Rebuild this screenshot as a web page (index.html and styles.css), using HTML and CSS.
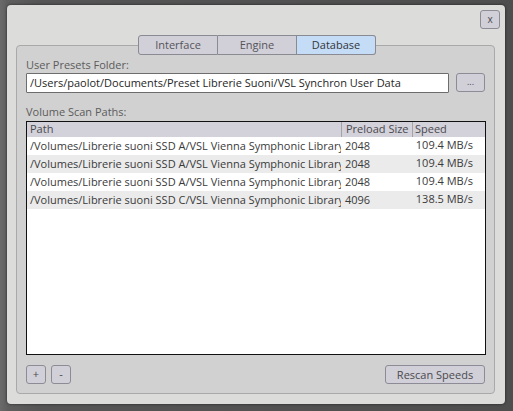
FILE: index.html
```html
<!DOCTYPE html>
<html>
<head>
<meta charset="utf-8">
<link rel="stylesheet" href="styles.css">
</head>
<body>
<div class="dialog">
  <div class="topbar"><button class="btn close">x</button></div>
  <div class="panel">
    <div class="tabs">
      <div class="tab">Interface</div>
      <div class="tab">Engine</div>
      <div class="tab active">Database</div>
    </div>
    <div class="label first">User Presets Folder:</div>
    <div class="folder-row">
      <div class="input">/Users/paolot/Documents/Preset Librerie Suoni/VSL Synchron User Data</div>
      <button class="btn browse">...</button>
    </div>
    <div class="label second">Volume Scan Paths:</div>
    <div class="table">
      <div class="row head">
        <div class="c path">Path</div>
        <div class="c size">Preload Size</div>
        <div class="c speed">Speed</div>
      </div>
      <div class="row">
        <div class="c path">/Volumes/Librerie suoni SSD A/VSL Vienna Symphonic Library</div>
        <div class="c size">2048</div>
        <div class="c speed">109.4 MB/s</div>
      </div>
      <div class="row alt">
        <div class="c path">/Volumes/Librerie suoni SSD A/VSL Vienna Symphonic Library</div>
        <div class="c size">2048</div>
        <div class="c speed">109.4 MB/s</div>
      </div>
      <div class="row">
        <div class="c path">/Volumes/Librerie suoni SSD A/VSL Vienna Symphonic Library</div>
        <div class="c size">2048</div>
        <div class="c speed">109.4 MB/s</div>
      </div>
      <div class="row alt">
        <div class="c path">/Volumes/Librerie suoni SSD C/VSL Vienna Symphonic Library</div>
        <div class="c size">4096</div>
        <div class="c speed">138.5 MB/s</div>
      </div>
    </div>
    <div class="bottom">
      <button class="btn small">+</button>
      <button class="btn small">-</button>
      <div class="spacer"></div>
      <button class="btn rescan">Rescan Speeds</button>
    </div>
  </div>
</div>
</body>
</html>
```
FILE: styles.css
```css
html, body {
  margin: 0;
  padding: 0;
}
body {
  width: 513px;
  height: 411px;
  overflow: hidden;
  background: linear-gradient(90deg, #6a6a6a 0px, #5e5e5e 8px, #555 40px, #4e4e4e 100%);
  font-family: "Open Sans", "Noto Sans", sans-serif;
  font-size: 11px;
  color: #2a2a2a;
  padding-top: 5px;
  box-sizing: border-box;
}
.dialog {
  margin-left: 7px;
  width: 498px;
  height: 399px;
  box-sizing: border-box;
  background: #dcdcda;
  border-radius: 4px;
  box-shadow: 0 0 3px rgba(0,0,0,0.6);
  padding: 5px 10px 10px 9px;
  display: flex;
  flex-direction: column;
}
.topbar {
  display: flex;
  justify-content: flex-end;
  margin-right: -5px;
  height: 19px;
}
.btn {
  font-family: "Open Sans", "Noto Sans", sans-serif;
  font-size: 11px;
  color: #4a4a50;
  background: #d1cfd7;
  border: 1px solid #8d8c96;
  border-radius: 3px;
  padding: 0;
  margin: 0;
  box-sizing: border-box;
  display: flex;
  align-items: center;
  justify-content: center;
}
.close {
  width: 20px;
  height: 19px;
  font-size: 10px;
  padding-bottom: 2px;
}
.panel {
  margin-top: 16px;
  flex: 1;
  border: 1px solid #a9a9a9;
  border-radius: 4px;
  background: #d1d1d1;
  padding: 0 8px 9px 9px;
  display: flex;
  flex-direction: column;
}
.tabs {
  margin-top: -11px;
  align-self: center;
  display: flex;
  height: 20px;
  margin-left: 2px;
}
.tab {
  width: 79px;
  box-sizing: border-box;
  height: 20px;
  border: 1px solid #8a8a92;
  border-left: none;
  background: #d1cfd7;
  color: #55555c;
  display: flex;
  align-items: center;
  justify-content: center;
  padding-bottom: 1px;
}
.tab:first-child {
  border-left: 1px solid #8a8a92;
  border-radius: 3px 0 0 3px;
  width: 80px;
}
.tab:last-child {
  border-radius: 0 3px 3px 0;
}
.tab.active {
  background: #c4dcf5;
  color: #33363c;
}
.label {
  color: #5c5c5c;
  line-height: 15px;
  height: 15px;
}
.label.first {
  margin-top: 2px;
}
.folder-row {
  margin-top: 1px;
  display: flex;
  height: 20px;
}
.input {
  width: 423px;
  height: 20px;
  box-sizing: border-box;
  background: #fff;
  border: 1px solid #6d6d6d;
  border-radius: 1px;
  padding: 0 0 0 3px;
  line-height: 17px;
  color: #262626;
  white-space: nowrap;
  overflow: hidden;
}
.browse {
  margin-left: 7px;
  width: 29px;
  height: 19px;
  font-size: 9px;
  padding-bottom: 3px;
}
.label.second {
  margin-top: 11px;
}
.table {
  margin-top: 2px;
  width: 460px;
  height: 234px;
  box-sizing: border-box;
  background: #fff;
  border: 1px solid #111;
  overflow: hidden;
}
.row {
  display: flex;
  height: 18px;
  line-height: 18px;
  color: #3a3a3a;
}
.row.head {
  height: 15px;
  line-height: 14px;
  background: #d3d1d9;
  color: #4a4a50;
}
.row.alt {
  background: #ebebeb;
}
.c {
  white-space: nowrap;
  overflow: hidden;
  box-sizing: border-box;
}
.path {
  width: 314px;
  padding-left: 3px;
}
.size {
  width: 71px;
  padding-left: 4px;
}
.speed {
  flex: 1;
  text-align: right;
  padding-right: 12px;
}
.row.head .size, .row.head .speed {
  border-left: 1px solid #a3a3a8;
}
.row.head .speed {
  text-align: left;
  padding-left: 2px;
}
.row:not(.head) .speed {
  line-height: 16px;
}
.bottom {
  margin-top: 10px;
  display: flex;
  height: 19px;
}
.small {
  width: 20px;
  height: 19px;
  margin-right: 5px;
  padding-bottom: 2px;
}
.spacer {
  flex: 1;
}
.rescan {
  width: 100px;
  height: 19px;
  padding-bottom: 1px;
  margin-right: 1px;
}
```
